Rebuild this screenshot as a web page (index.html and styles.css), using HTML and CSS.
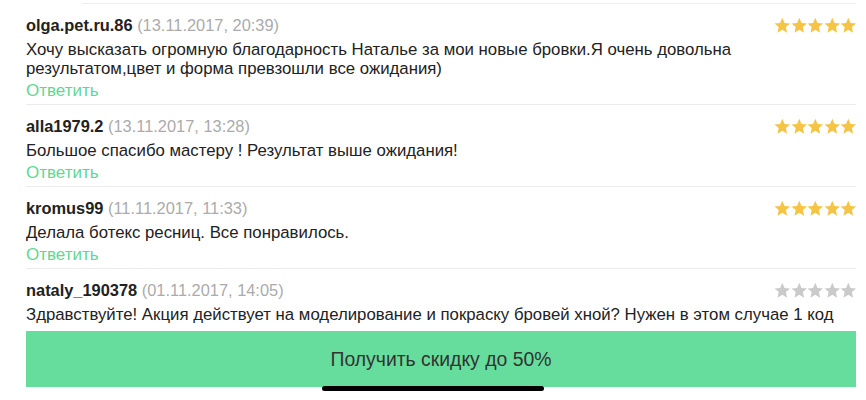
FILE: index.html
```html
<!DOCTYPE html>
<html lang="ru">
<head>
<meta charset="utf-8">
<title>Отзывы</title>
<link rel="stylesheet" href="styles.css">
</head>
<body>
<svg width="0" height="0" class="defs" aria-hidden="true">
  <defs>
    <symbol id="star" viewBox="0 0 16 16">
      <polygon points="8,0.6 10.15,5.5 15.5,6 11.45,9.55 12.65,14.9 8,12.1 3.35,14.9 4.55,9.55 0.5,6 5.85,5.5"/>
    </symbol>
  </defs>
</svg>
<div class="list">
  <div class="top-rule"></div>

  <div class="review">
    <div class="head">
      <div class="who"><span class="name">olga.pet.ru.86</span> <span class="date">(13.11.2017, 20:39)</span></div>
      <div class="stars gold"><svg><use href="#star"/></svg><svg><use href="#star"/></svg><svg><use href="#star"/></svg><svg><use href="#star"/></svg><svg><use href="#star"/></svg></div>
    </div>
    <p class="text">Хочу высказать огромную благодарность Наталье за мои новые бровки.Я очень довольна результатом,цвет и форма превзошли все ожидания)</p>
    <div class="reply">Ответить</div>
  </div>

  <div class="review">
    <div class="head">
      <div class="who"><span class="name">alla1979.2</span> <span class="date">(13.11.2017, 13:28)</span></div>
      <div class="stars gold"><svg><use href="#star"/></svg><svg><use href="#star"/></svg><svg><use href="#star"/></svg><svg><use href="#star"/></svg><svg><use href="#star"/></svg></div>
    </div>
    <p class="text">Большое спасибо мастеру ! Результат выше ожидания!</p>
    <div class="reply">Ответить</div>
  </div>

  <div class="review">
    <div class="head">
      <div class="who"><span class="name">kromus99</span> <span class="date">(11.11.2017, 11:33)</span></div>
      <div class="stars gold"><svg><use href="#star"/></svg><svg><use href="#star"/></svg><svg><use href="#star"/></svg><svg><use href="#star"/></svg><svg><use href="#star"/></svg></div>
    </div>
    <p class="text">Делала ботекс ресниц. Все понравилось.</p>
    <div class="reply">Ответить</div>
  </div>

  <div class="review">
    <div class="head">
      <div class="who"><span class="name">nataly_190378</span> <span class="date">(01.11.2017, 14:05)</span></div>
      <div class="stars grey"><svg><use href="#star"/></svg><svg><use href="#star"/></svg><svg><use href="#star"/></svg><svg><use href="#star"/></svg><svg><use href="#star"/></svg></div>
    </div>
    <p class="text">Здравствуйте! Акция действует на моделирование и покраску бровей хной? Нужен в этом случае 1 код</p>
    <div class="reply">Ответить</div>
  </div>
</div>

<div class="footer">
  <button class="cta">Получить скидку до 50%</button>
</div>
<div class="home-indicator"></div>
</body>
</html>
```

FILE: styles.css
```css
html, body {
  margin: 0;
  padding: 0;
  background: #ffffff;
  overflow: hidden;
}

body {
  font-family: "Liberation Sans", Arial, Helvetica, sans-serif;
  font-size: 16px;
  color: #222222;
  height: 400px;
}

.defs {
  position: absolute;
  width: 0;
  height: 0;
}

.list {
  padding: 3px 10px 0 26px;
}

.top-rule {
  margin-left: 56px;
  height: 1px;
  background: #eeeeee;
}

.review {
  border-bottom: 1px solid #ececec;
  padding: 10px 0 2px;
}

.head {
  display: flex;
  align-items: center;
  justify-content: space-between;
  height: 22px;
}

.who {
  line-height: 22px;
  white-space: nowrap;
  font-size: 16.4px;
}

.name {
  font-weight: bold;
  color: #222222;
}

.date {
  color: #ababab;
}

.stars {
  display: flex;
  margin-right: -1px;
  margin-top: 1px;
}

.stars svg {
  width: 16.6px;
  height: 17px;
  display: block;
}

.gold svg {
  fill: #f6c445;
}

.grey svg {
  fill: #cacaca;
}

.text {
  margin: 4px 14px 0 0;
  font-size: 16.8px;
  line-height: 19px;
}

.reply {
  margin-top: 2px;
  color: #5fd892;
  font-size: 17px;
  line-height: 22px;
}

.footer {
  position: fixed;
  left: 0;
  right: 0;
  bottom: 0;
  height: 75px;
  background: rgba(255, 255, 255, 0.96);
  padding: 6px 10px 0 26px;
  box-sizing: border-box;
}

.cta {
  display: block;
  width: 100%;
  height: 56px;
  border: 0;
  border-radius: 0;
  background: #66dd9d;
  color: #333333;
  font-family: "Liberation Sans", Arial, Helvetica, sans-serif;
  font-size: 19.4px;
  padding: 0;
}

.home-indicator {
  position: fixed;
  left: 322px;
  width: 222px;
  bottom: 9px;
  height: 5px;
  border-radius: 3px;
  background: #000000;
}
```
